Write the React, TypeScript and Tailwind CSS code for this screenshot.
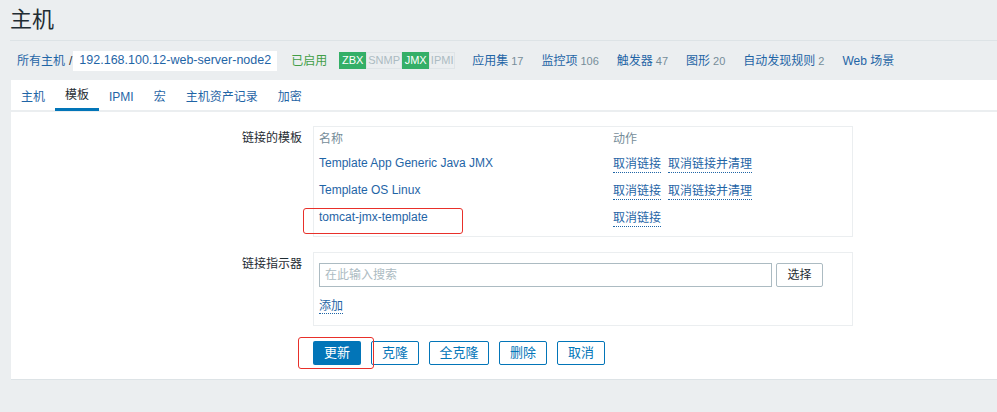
import React from "react";

const font = { fontFamily: '"Liberation Sans", Arial, "Noto Sans CJK SC", sans-serif' };

const navLinks: { label: string; count?: number }[] = [
  { label: "应用集", count: 17 },
  { label: "监控项", count: 106 },
  { label: "触发器", count: 47 },
  { label: "图形", count: 20 },
  { label: "自动发现规则", count: 2 },
  { label: "Web 场景" },
];

const tabs = ["主机", "模板", "IPMI", "宏", "主机资产记录", "加密"];

const templates: { name: string; clear: boolean }[] = [
  { name: "Template App Generic Java JMX", clear: true },
  { name: "Template OS Linux", clear: true },
  { name: "tomcat-jmx-template", clear: false },
];

function DotLink({ children }: { children: React.ReactNode }) {
  return (
    <span className="text-[#1f65a6] border-b border-dotted border-[#1f65a6] leading-[15px] cursor-pointer">
      {children}
    </span>
  );
}

export default function App() {
  return (
    <div className="w-[997px] h-[412px] bg-[#ebeef0] text-[12px] text-[#1f2c33] overflow-hidden" style={font}>
      {/* header */}
      <div className="ml-[10px] h-[41px] border-b border-[#dde3e6] flex items-center">
        <h1 className="text-[22px] leading-none text-[#1f2c33] -mt-[1px]">主机</h1>
      </div>

      {/* breadcrumb row */}
      <div className="h-[39px] flex items-center pl-[17px]">
        <span className="text-[#1f65a6]">所有主机</span>
        <span className="text-[#1f2c33] ml-[4px]">/</span>
        <span className="ml-[1px] bg-white h-[20px] px-[6px] flex items-center text-[12.5px] text-[#1f65a6]">
          192.168.100.12-web-server-node2
        </span>
        <span className="ml-[14px] text-[#429e47]">已启用</span>
        <div className="ml-[12px] flex h-[17px] text-[11px] leading-none">
          <span className="w-[27px] bg-[#34af67] text-white flex items-center justify-center border border-[#34af67]">ZBX</span>
          <span className="w-[36px] bg-[#ebeef0] text-[#acbbc2] flex items-center justify-center border border-[#dfe4e7]">SNMP</span>
          <span className="w-[27px] bg-[#34af67] text-white flex items-center justify-center border border-[#34af67]">JMX</span>
          <span className="w-[26px] bg-[#ebeef0] text-[#acbbc2] flex items-center justify-center border border-[#dfe4e7]">IPMI</span>
        </div>
        <div className="ml-[17px] flex gap-[18px]">
          {navLinks.map((l) => (
            <span key={l.label} className="text-[#1f65a6]">
              {l.label}
              {l.count !== undefined && <span className="ml-[3px] text-[11px] text-[#768d99]">{l.count}</span>}
            </span>
          ))}
        </div>
      </div>

      {/* main panel */}
      <div className="ml-[11px] h-[300px] bg-white border-b border-[#dde3e6] relative">
        <div className="h-[32px] border-b-2 border-[#ebeef0] flex">
          {tabs.map((t, i) => (
            <div
              key={t}
              className={
                "h-[31px] px-[10px] flex items-center pt-[2px] " +
                (i === 1 ? "text-[#1f2c33] border-b-[3px] border-[#0275b8] -mb-[1px]" : "text-[#1f65a6]")
              }
            >
              {t}
            </div>
          ))}
        </div>

        <div className="pt-[14px]">
          {/* linked templates */}
          <div className="flex">
            <div className="w-[291px] text-right pt-[5px] leading-[15px]">链接的模板</div>
            <div className="ml-[11px] w-[540px] border border-[#ebeef0] px-[5px] pt-[5px] pb-[8px]">
              <div className="flex h-[15px] leading-[15px] text-[#768d99]">
                <span className="w-[294px]">名称</span>
                <span>动作</span>
              </div>
              {templates.map((tpl) => (
                <div key={tpl.name} className="flex h-[27px] items-end pb-[1px]">
                  <span className="w-[294px] text-[#1f65a6] leading-[15px] pb-[2px]">{tpl.name}</span>
                  <span className="flex gap-[7px]">
                    <DotLink>取消链接</DotLink>
                    {tpl.clear && <DotLink>取消链接并清理</DotLink>}
                  </span>
                </div>
              ))}
            </div>
          </div>

          {/* link indicator */}
          <div className="flex mt-[15px]">
            <div className="w-[291px] text-right pt-[5px] leading-[15px]">链接指示器</div>
            <div className="ml-[11px] w-[540px] border border-[#ebeef0] px-[5px] pt-[10px] pb-[10px]">
              <div className="flex gap-[4px]">
                <div className="w-[453px] h-[24px] border border-[#acbbc2] flex items-center px-[5px] text-[#acbbc2]">
                  在此输入搜索
                </div>
                <div className="w-[47px] h-[24px] border border-[#acbbc2] rounded-[2px] flex items-center justify-center text-[#1f2c33]">
                  选择
                </div>
              </div>
              <div className="mt-[10px]">
                <DotLink>添加</DotLink>
              </div>
            </div>
          </div>

          {/* buttons */}
          <div className="flex gap-[10px] mt-[15px] ml-[302px] text-[13px]">
            <div className="w-[48px] h-[24px] bg-[#0275b8] text-white rounded-[2px] flex items-center justify-center">更新</div>
            <div className="w-[48px] h-[24px] border border-[#0275b8] text-[#0275b8] rounded-[2px] flex items-center justify-center">克隆</div>
            <div className="w-[60px] h-[24px] border border-[#0275b8] text-[#0275b8] rounded-[2px] flex items-center justify-center">全克隆</div>
            <div className="w-[48px] h-[24px] border border-[#0275b8] text-[#0275b8] rounded-[2px] flex items-center justify-center">删除</div>
            <div className="w-[48px] h-[24px] border border-[#0275b8] text-[#0275b8] rounded-[2px] flex items-center justify-center">取消</div>
          </div>
        </div>

        {/* red annotation boxes */}
        <div className="absolute left-[292px] top-[128px] w-[160px] h-[26px] border border-[#e8302a] rounded-[3px]" />
        <div className="absolute left-[287px] top-[257px] w-[76px] h-[32px] border border-[#e8302a] rounded-[3px]" />
      </div>
    </div>
  );
}
